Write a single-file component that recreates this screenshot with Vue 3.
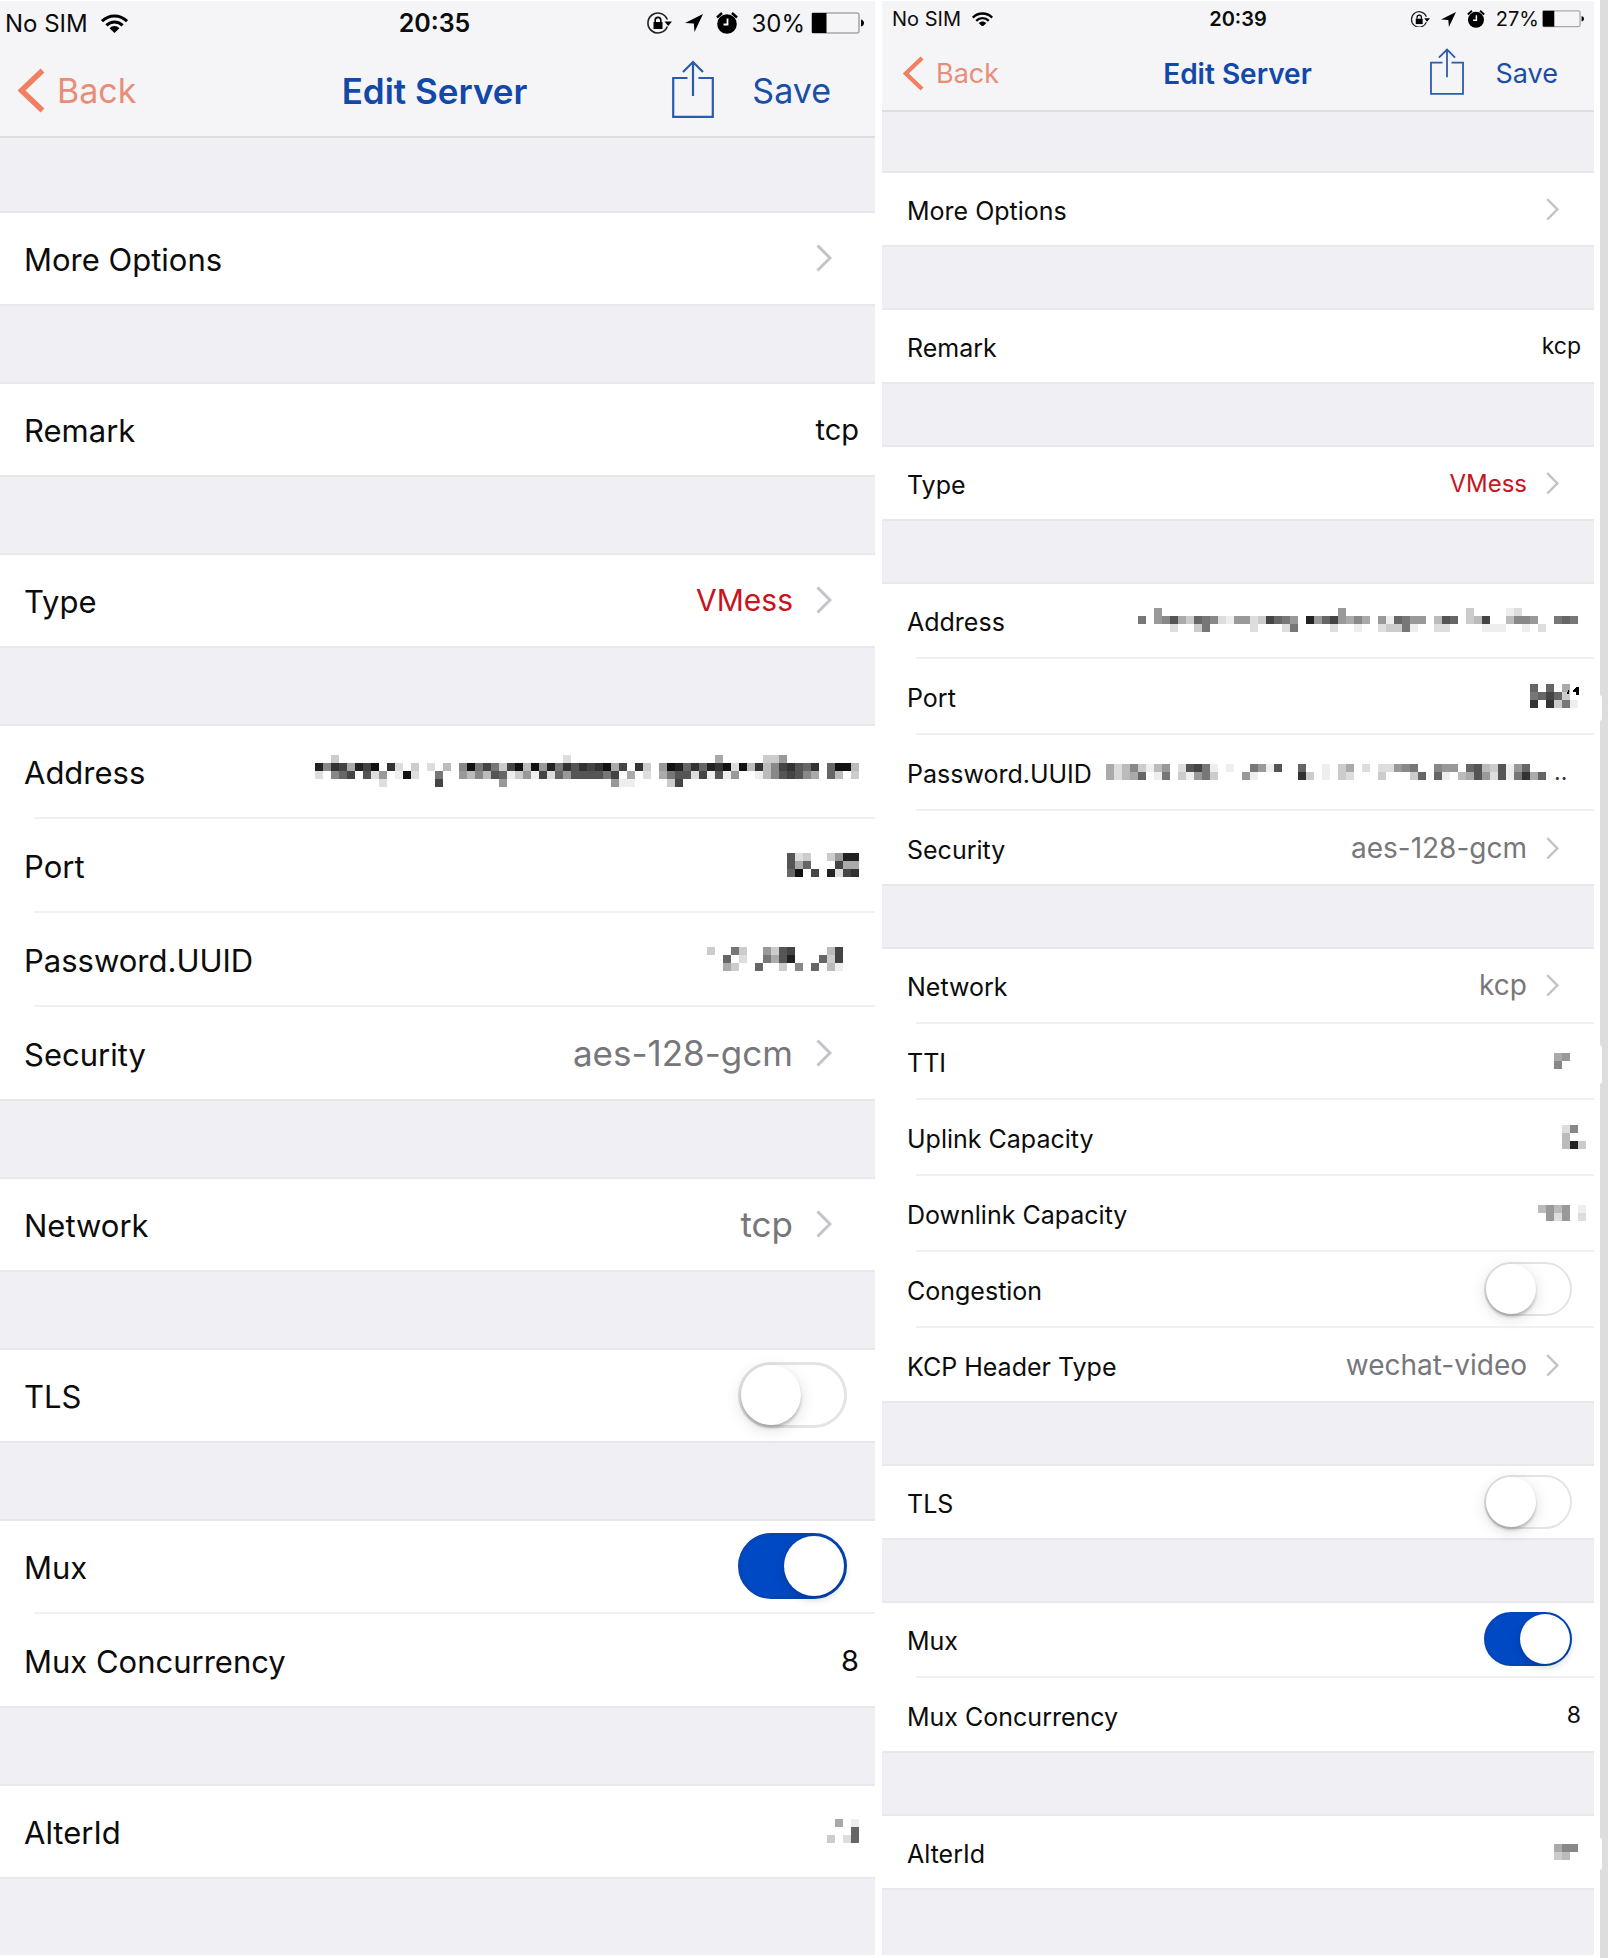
<script setup>
import { reactive } from 'vue'

// Redacted values: one hex digit per block is its grey level, a dot is an empty block.
const masks = {
  tcpAddress: [
    '..c............................d..................a.....cc9.........',
    '2834a241.3d.c.d.b.8174' + '7c41b192735343' + '1a4.3c.912636231d1b3b843563.611b',
    'd.864.5d9.e1d.f7..9b8b56ec9e4d6955557' + '4fafd.a755d4e5e9ffeb85458a.6bfc',
    '........d.f....4.......9.............9ee.f..c4......................',
  ],
  tcpPort: ['5dc..c922', '5a6.f.4aa', '61f4.2d43'],
  tcpPassword: ['c..7c..9c54....b4..', 'f.6.d..7a52...6c4..', '..acf.6..c.8.6.be..'],
  tcpAlter: ['.a.e', '...6', 'c.d6'],
  kcpAddress: [
    '..9......................9...............c....ed.......f',
    '7.985ac678de99dc4679f2964' + '9a8a.9e6799.b56.cb4..b889..767.',
    '.fffd.fc7fff..dfffd7..ffdf.ef.dcc7ef.dd..ffeee.fefd.fff.',
  ],
  kcpPort: ['6.6fa..', '7646c..', '3.3c7e.'],
  kcpPassword: [
    'adb8ceb9.d547e.e..79e5..6f.e.ca.d.dd987..899.65bc5e96.f',
    'adba6fe7.ce97cff.9e.ff.f3c.e.cdff.c.ffc6.6efba59d5e73a6',
  ],
  tti: ['a9..', '8..f'],
  uplink: ['d8.', 'b.f', 'b2c'],
  downlink: ['b9b9.e', '.9d9.d'],
  kcpAlter: ['a88.', 'cb..'],
}

const cells = (rows) =>
  rows.flatMap((row, y) =>
    [...row].map((c, x) => ({ x: x * 8, y: y * 8, fill: `#${c}${c}${c}`, on: c !== '.' })).filter((c) => c.on)
  )

const screens = reactive([
  {
    id: 'tcp',
    size: 'large',
    time: '20:35',
    battery: '30%',
    groups: [
      [{ label: 'More Options', kind: 'link', value: '' }],
      [{ label: 'Remark', kind: 'input', value: 'tcp' }],
      [{ label: 'Type', kind: 'link', value: 'VMess', accent: true }],
      [
        { label: 'Address', kind: 'mask', mask: masks.tcpAddress },
        { label: 'Port', kind: 'mask', mask: masks.tcpPort },
        { label: 'Password.UUID', kind: 'mask', mask: masks.tcpPassword },
        { label: 'Security', kind: 'link', value: 'aes-128-gcm' },
      ],
      [{ label: 'Network', kind: 'link', value: 'tcp' }],
      [{ label: 'TLS', kind: 'switch', value: false }],
      [
        { label: 'Mux', kind: 'switch', value: true },
        { label: 'Mux Concurrency', kind: 'input', value: '8' },
      ],
      [{ label: 'AlterId', kind: 'mask', mask: masks.tcpAlter }],
    ],
  },
  {
    id: 'kcp',
    size: 'small',
    time: '20:39',
    battery: '27%',
    groups: [
      [{ label: 'More Options', kind: 'link', value: '' }],
      [{ label: 'Remark', kind: 'input', value: 'kcp' }],
      [{ label: 'Type', kind: 'link', value: 'VMess', accent: true }],
      [
        { label: 'Address', kind: 'mask', mask: masks.kcpAddress },
        { label: 'Port', kind: 'mask', mask: masks.kcpPort, tick: true },
        { label: 'Password.UUID', kind: 'mask', mask: masks.kcpPassword, tail: '..' },
        { label: 'Security', kind: 'link', value: 'aes-128-gcm' },
      ],
      [
        { label: 'Network', kind: 'link', value: 'kcp' },
        { label: 'TTI', kind: 'mask', mask: masks.tti },
        { label: 'Uplink Capacity', kind: 'mask', mask: masks.uplink },
        { label: 'Downlink Capacity', kind: 'mask', mask: masks.downlink },
        { label: 'Congestion', kind: 'switch', value: false },
        { label: 'KCP Header Type', kind: 'link', value: 'wechat-video' },
      ],
      [{ label: 'TLS', kind: 'switch', value: false }],
      [
        { label: 'Mux', kind: 'switch', value: true },
        { label: 'Mux Concurrency', kind: 'input', value: '8' },
      ],
      [{ label: 'AlterId', kind: 'mask', mask: masks.kcpAlter }],
    ],
  },
])

const fieldId = (screen, row) => `${screen.id}-${row.label.replace(/\W+/g, '-').toLowerCase()}`
</script>

<template>
  <main class="page">
    <section v-for="screen in screens" :key="screen.id" class="screen" :class="screen.size">
      <header class="top">
        <div class="status">
          <div class="status-side">
            <span>No SIM</span>
            <svg class="wifi" viewBox="0 0 27 19" aria-hidden="true">
              <g fill="none" stroke="#000" stroke-width="3">
                <path d="M1 7.2C8 .2 19 .2 26 7.2" />
                <path d="M5.4 11.4C10 6.8 17 6.8 21.600 11.4" />
              </g>
              <path d="M8.600 14.200C11.500 11.400 15.500 11.400 18.400 14.200L13.500 19Z" />
            </svg>
          </div>
          <strong class="clock">{{ screen.time }}</strong>
          <div class="status-side end">
            <svg class="lock" viewBox="0 0 26 22" aria-hidden="true">
              <path d="M21.300 7.500A10 10 0 1 0 21.300 14.500" fill="none" stroke="#222" stroke-width="1.600" />
              <path d="M18.500 9.500H26L22.200 14Z" />
              <path d="M7.500 10h9v7h-9z" />
              <path d="M9.200 10V8.200a2.800 2.800 0 0 1 5.600 0V10" fill="none" stroke="#000" stroke-width="1.600" />
            </svg>
            <svg class="arrow" viewBox="0 0 18 18" aria-hidden="true">
              <path d="M18 0L9.500 18L8.800 9.600L0 9Z" />
            </svg>
            <svg class="alarm" viewBox="0 0 22 22" aria-hidden="true">
              <circle cx="11" cy="12" r="9.800" />
              <path d="M1 5.500L6 1M21 5.500L16 1" stroke="#000" stroke-width="2.400" />
              <path d="M11.500 6.500V12.500H7.500" fill="none" stroke="#fff" stroke-width="1.800" />
            </svg>
            <span class="percent">{{ screen.battery }}</span>
            <svg class="battery" viewBox="0 0 53 22" aria-hidden="true">
              <rect x="1" y="1" width="47" height="20" rx="2" fill="none" stroke="#a9a9ab" stroke-width="1.600" />
              <path d="M1 1h14.500v20H1z" />
              <path d="M50 7.500C52 8 53 9.500 53 11S52 14 50 14.500Z" />
            </svg>
          </div>
        </div>
        <nav class="nav">
          <button type="button" class="back">
            <svg class="back-icon" viewBox="0 0 27 45" aria-hidden="true">
              <path d="M24.500 2.500L3.500 22.500L24.500 42.500" fill="none" stroke="#f08060" stroke-width="5.500" />
            </svg>
            Back
          </button>
          <h1 class="title">Edit Server</h1>
          <div class="actions">
            <button type="button" aria-label="Share">
              <svg class="share" viewBox="0 0 42 58" aria-hidden="true">
                <path
                  d="M15.500 18H1.200V56.800H40.800V18H26.500M21 36V2M11 12L21 2L31 12"
                  fill="none"
                  stroke="#2a5caa"
                  stroke-width="2.200"
                />
              </svg>
            </button>
            <button type="button" class="save">Save</button>
          </div>
        </nav>
      </header>

      <div class="groups">
        <div v-for="(group, g) in screen.groups" :key="g" class="group">
          <template v-for="row in group" :key="row.label">
            <button v-if="row.kind === 'link'" type="button" class="row link">
              <span class="label">{{ row.label }}</span>
              <span class="choice" :class="{ accent: row.accent }">{{ row.value }}</span>
              <svg class="chevron" viewBox="0 0 16 28" aria-hidden="true">
                <path d="M1.500 1.500L14 14L1.500 26.500" fill="none" stroke="#c4c4c8" stroke-width="3" />
              </svg>
            </button>
            <div v-else class="row">
              <label v-if="row.kind !== 'mask'" class="label" :for="fieldId(screen, row)">{{ row.label }}</label>
              <span v-else class="label">{{ row.label }}</span>
              <input
                v-if="row.kind === 'input'"
                :id="fieldId(screen, row)"
                v-model="row.value"
                class="field"
                type="text"
              />
              <input
                v-else-if="row.kind === 'switch'"
                :id="fieldId(screen, row)"
                v-model="row.value"
                class="switch"
                type="checkbox"
                role="switch"
              />
              <span v-else class="masked">
                <svg
                  :width="row.mask[0].length * 8"
                  :height="row.mask.length * 8"
                  shape-rendering="crispEdges"
                  aria-hidden="true"
                >
                  <rect
                    v-for="(c, i) in cells(row.mask)"
                    :key="i"
                    :x="c.x"
                    :y="c.y"
                    width="8"
                    height="8"
                    :fill="c.fill"
                  />
                  <path v-if="row.tick" d="M38 6h1v4h-2zM43 6l3-3h3v8h-3v-3h-3z" />
                </svg>
                <span v-if="row.tail" class="tail">{{ row.tail }}</span>
              </span>
            </div>
          </template>
        </div>
      </div>
    </section>
    <i class="notch first"></i>
    <i class="notch second"></i>
    <i class="notch third"></i>
  </main>
</template>

<style>
body {
  margin: 0;
  background: #fff;
}
</style>

<style scoped>
.page {
  position: relative;
  display: grid;
  grid-template-columns: 875fr 712fr;
  gap: 7px;
  box-sizing: border-box;
  min-height: 100vh;
  padding: 1px 6px 3px 0;
  border-right: 8px solid #ddd;
  background: #fff;
  font-family: Inter, 'Liberation Sans', sans-serif;
  color: #0c0c0c;
}

.large {
  --status-h: 44px;
  --status-pad: 0 11px 0 5px;
  --status-font: 24px;
  --clock-font: 25px;
  --status-gap: 13px;
  --battery-gap: 6px;
  --wifi-w: 27px;
  --lock-w: 26px;
  --arrow-w: 18px;
  --alarm-w: 22px;
  --battery-w: 53px;
  --nav-h: 91px;
  --nav-pad: 0 24px 0 18px;
  --nav-font: 34px;
  --title-font: 35px;
  --back-w: 27px;
  --back-gap: 12px;
  --share-w: 42px;
  --share-gap: 38px;
  --share-lift: 4px;
  --save-end: 20px;
  --first-gap: 73px;
  --gap: 76px;
  --row-h: 94px;
  --group-end: 1px;
  --row-start: 24px;
  --row-end: 16px;
  --label-drop: 3px;
  --label-font: 31px;
  --field-font: 29px;
  --accent-font: 30px;
  --choice-font: 35px;
  --chevron-w: 16px;
  --chevron-gap: 23px;
  --chevron-end: 43px;
  --switch-w: 109px;
  --switch-h: 66px;
  --switch-line: 3px;
  --switch-end: 28px;
  --mask-end: 0px;
}

.small {
  --status-h: 36px;
  --status-pad: 0 10px 0 10px;
  --status-font: 20px;
  --clock-font: 20px;
  --status-gap: 11px;
  --battery-gap: 3px;
  --wifi-w: 21px;
  --lock-w: 20px;
  --arrow-w: 15px;
  --alarm-w: 18px;
  --battery-w: 42px;
  --nav-h: 73px;
  --nav-pad: 0 22px 0 21px;
  --nav-font: 27px;
  --title-font: 28px;
  --back-w: 21px;
  --back-gap: 12px;
  --share-w: 34px;
  --share-gap: 32px;
  --share-lift: 4px;
  --save-end: 14px;
  --first-gap: 59px;
  --gap: 61px;
  --row-h: 76px;
  --group-end: 0px;
  --row-start: 25px;
  --row-end: 13px;
  --label-drop: 3px;
  --label-font: 25px;
  --field-font: 23px;
  --accent-font: 24px;
  --choice-font: 28px;
  --chevron-w: 13px;
  --chevron-gap: 19px;
  --chevron-end: 35px;
  --switch-w: 88px;
  --switch-h: 54px;
  --switch-line: 2px;
  --switch-end: 22px;
  --mask-end: -5px;
}

.screen {
  min-width: 0;
  background: #efeff4;
}

button {
  margin: 0;
  padding: 0;
  border: 0;
  background: none;
  color: inherit;
  font: inherit;
  cursor: pointer;
}

svg {
  display: block;
  flex: none;
}

.top {
  border-bottom: 2px solid #dcdce1;
  background: #f5f5f8;
}

.status {
  display: grid;
  grid-template-columns: 1fr auto 1fr;
  align-items: center;
  height: var(--status-h);
  padding: var(--status-pad);
  font-size: var(--status-font);
}

.status-side {
  display: flex;
  align-items: center;
  gap: var(--status-gap);
}

.end {
  justify-content: flex-end;
}

.clock {
  font-size: var(--clock-font);
  font-weight: 600;
}

.percent {
  margin-right: calc(var(--battery-gap) - var(--status-gap));
}

.wifi {
  width: var(--wifi-w);
}

.lock {
  width: var(--lock-w);
}

.arrow {
  width: var(--arrow-w);
}

.alarm {
  width: var(--alarm-w);
}

.battery {
  width: var(--battery-w);
}

.nav {
  display: grid;
  grid-template-columns: 1fr auto 1fr;
  align-items: center;
  height: var(--nav-h);
  padding: var(--nav-pad);
  font-size: var(--nav-font);
  color: #1a4ea6;
}

.back {
  display: flex;
  align-items: center;
  gap: var(--back-gap);
  color: #e88e78;
}

.back-icon {
  width: var(--back-w);
}

.title {
  margin: 0;
  font-size: var(--title-font);
  font-weight: 600;
  color: #1248a8;
}

.actions {
  display: flex;
  align-items: center;
  justify-content: flex-end;
  gap: var(--share-gap);
  padding-right: var(--save-end);
}

.share {
  width: var(--share-w);
  margin-bottom: var(--share-lift);
}

.groups {
  display: flex;
  flex-direction: column;
  gap: var(--gap);
  padding: var(--first-gap) 0 var(--gap);
}

.group {
  padding-bottom: var(--group-end);
  background: #fff;
  box-shadow: inset 0 2px #e7e7ec, inset 0 -2px #e7e7ec;
}

.row {
  position: relative;
  display: flex;
  align-items: center;
  box-sizing: border-box;
  width: 100%;
  height: var(--row-h);
  padding: 0 var(--row-end) 0 var(--row-start);
  text-align: left;
}

.row + .row::before {
  content: '';
  position: absolute;
  top: -1px;
  right: 0;
  left: 34px;
  height: 2px;
  background: #f0f0f1;
}

.link {
  padding-right: var(--chevron-end);
}

.label {
  flex: none;
  padding-top: var(--label-drop);
  font-size: var(--label-font);
}

.choice {
  margin-left: auto;
  font-size: var(--choice-font);
  color: #77777b;
}

.accent {
  font-size: var(--accent-font);
  color: #c8141e;
}

.chevron {
  width: var(--chevron-w);
  margin-left: var(--chevron-gap);
}

.field {
  flex: 1;
  min-width: 0;
  padding: 0;
  border: 0;
  outline: 0;
  background: none;
  font-family: inherit;
  font-size: var(--field-font);
  text-align: right;
  color: inherit;
}

.masked {
  display: flex;
  align-items: center;
  margin-right: var(--mask-end);
  margin-left: auto;
}

.tail {
  box-sizing: border-box;
  width: 40px;
  padding-left: 8px;
  font-size: var(--field-font);
  color: #333;
}

.switch {
  appearance: none;
  box-sizing: border-box;
  width: var(--switch-w);
  height: var(--switch-h);
  margin: 0 calc(var(--switch-end) - var(--row-end)) 0 auto;
  border: var(--switch-line) solid #e4e4e4;
  border-radius: 40px;
  background: #fff;
  cursor: pointer;
}

.switch::before {
  content: '';
  display: block;
  height: 100%;
  aspect-ratio: 1;
  border-radius: 50%;
  background: #fff;
  box-shadow: 0 3px 3px rgba(0, 0, 0, 0.2), 0 4px 16px rgba(0, 0, 0, 0.14);
}

.switch:checked {
  border-color: #0545b4;
  background: #0049c4;
}

.switch:checked::before {
  margin-left: auto;
  box-shadow: 0 3px 8px rgba(0, 0, 0, 0.2);
}

.notch {
  position: absolute;
  right: -2px;
  width: 4px;
  border-radius: 0 3px 3px 0;
  background: #fff;
}

.first {
  top: 695px;
  height: 26px;
}

.second {
  top: 1045px;
  height: 39px;
}

.third {
  top: 1838px;
  height: 32px;
}
</style>
